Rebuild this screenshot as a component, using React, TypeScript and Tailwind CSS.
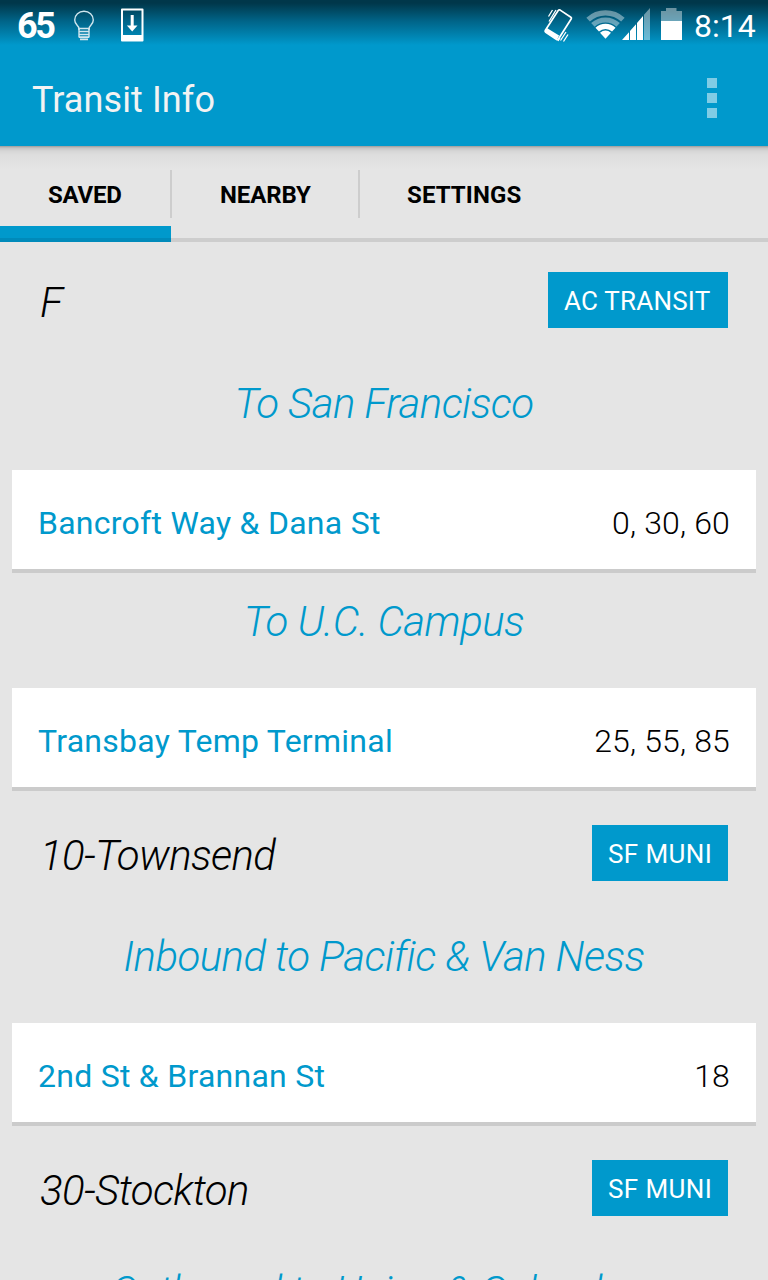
import React from "react";

function StatusBar() {
  return (
    <div className="flex h-[50px] items-start bg-gradient-to-b from-[#00374a] from-6% via-[#006488] via-42% to-[#0099cc] to-90%">
      <span className="ml-[17px] mt-[5px] w-[39px] text-[36px] font-bold leading-[42px] tracking-[-2.5px] text-white">65</span>
      <svg className="ml-[16px] mt-[10px]" width="24" height="32" viewBox="0 0 24 32" fill="none" stroke="#d0e6ee" strokeWidth="1.4">
        <path d="M7 20v-1.500C7 15.800 2.700 14.800 2.700 10A9.300 8.800 0 0 1 21.300 10C21.300 14.800 17 15.800 17 18.500V20" />
        <path d="M6.300 18.500h11.400M7 21.500h10M7 24.500h10M7 27.200h10M8 29.300h8" strokeWidth="1.700" />
        <path d="M7 18v9.500M17 18v9.500" />
      </svg>
      <svg className="ml-[24px] mt-[8px]" width="24" height="34" viewBox="0 0 24 34" fill="#fff">
        <path fillRule="evenodd" d="M2 .5h20.500q1 0 1 1v31q0 1-1 1H2q-1 0-1-1v-31q0-1 1-1zM3 2.500V27h18.500V2.500z" />
        <path d="M10.700 7h3v10.500h3.800l-5.300 6-5.300-6h3.800z" />
      </svg>
      <svg className="ml-auto mt-[7px]" width="30" height="36" viewBox="0 0 30 36" fill="none" stroke="#fff" strokeWidth="1.700">
        <path d="M16.200 3.100l10.700 7.200q.9.600.4 1.500L14.600 31.800q-.8 1.400-2 .7L1.800 25.300q-1.200-.8-.4-2L14.200 3.500q.8-1.100 2-.4z" />
        <path fill="#fff" stroke="none" d="M2.500 20.800l12.600 7.700-2 4.200L1 25z" />
        <path strokeWidth="1.300" d="M4.500 9.500l4-6.500M5 14.500l7-11.500M16.500 33.500l5.500-8.500M19.500 34.500l4.500-7M14 34l2-3" />
      </svg>
      <svg className="ml-[12px] mt-[8px]" width="96" height="34" viewBox="0 0 96 34">
        <g fill="none" strokeWidth="5.200">
          <path stroke="#fff" strokeOpacity=".4" d="M2.100 11.700A25.800 25.800 0 0 1 36.900 11.700" />
          <path stroke="#fff" strokeOpacity=".4" d="M6.900 16.900A18.700 18.700 0 0 1 32.100 16.900" />
          <path stroke="#fff" d="M11.200 21.600A12.300 12.300 0 0 1 27.800 21.600" />
        </g>
        <path fill="#fff" d="M19.500 30.700L14 24.700Q19.500 20.500 25 24.700z" />
        <path fill="#fff" d="M36 32l7-7.800V32zM44 22.900l6-6.700V32h-6zM51 14.900l6-6.900V32h-6z" />
        <path fill="#fff" fillOpacity=".42" d="M58 6.800L64 0v32h-6zM75 3h5V0h10.500v3H96v10H75z" />
        <path fill="#fff" d="M75 13h21v19H75z" />
      </svg>
      <span className="mt-[5px] w-[86px] pl-3 text-[32px] leading-[42px] text-white">8:14</span>
    </div>
  );
}

function Tabs() {
  return (
    <nav className="flex h-24 bg-[linear-gradient(to_bottom,#9c9c9c_0px,#c4c4c4_2px,#d6d6d6_5px,#dedede_9px,#e1e1e1_15px,#e5e5e5_24px)] text-[24px] font-bold leading-[50px] text-black">
      <div className="flex w-[171px] flex-col pt-6">
        <span className="h-14 pl-12 tracking-[-0.2px]">SAVED</span>
        <span className="h-4 border-b-4 border-[#008aba] bg-[#0099cc]" />
      </div>
      <div className="flex flex-1 border-b-4 border-[#cdcdcd] pt-6">
        <div className="relative -ml-px h-12 w-[190px] border-x-2 border-[#cdcdcd] pl-12 tracking-[-0.1px]">NEARBY</div>
        <div className="h-12 pl-[47px] tracking-[0.1px]">SETTINGS</div>
      </div>
    </nav>
  );
}

const lines = [
  { kind: "route", name: "F", agency: "AC TRANSIT" },
  { kind: "dir", name: "To San Francisco" },
  { kind: "stop", name: "Bancroft Way & Dana St", times: "0, 30, 60" },
  { kind: "dir", name: "To U.C. Campus" },
  { kind: "stop", name: "Transbay Temp Terminal", times: "25, 55, 85" },
  { kind: "route", name: "10-Townsend", agency: "SF MUNI" },
  { kind: "dir", name: "Inbound to Pacific & Van Ness" },
  { kind: "stop", name: "2nd St & Brannan St", times: "18" },
  { kind: "route", name: "30-Stockton", agency: "SF MUNI" },
  { kind: "dir", name: "Outbound to Union & Columbus" },
];

function Line({ line }: { line: (typeof lines)[number] }) {
  if (line.kind === "route") {
    return (
      <div className="flex h-[117px] items-start justify-between px-10 pt-[34px] first:h-[113px] first:pt-[30px]">
        <span className="text-[42px] font-light italic leading-[62px] tracking-[-0.6px] text-black">{line.name}</span>
        {line.agency === "AC TRANSIT" ? (
          <span className="flex h-14 w-[180px] items-center bg-[#0099cc] pl-4 pt-[2px] text-[26px] tracking-[0.2px] text-white">{line.agency}</span>
        ) : (
          <span className="flex h-14 w-[136px] items-center bg-[#0099cc] pl-4 pt-[2px] text-[26px] tracking-[0.4px] text-white">{line.agency}</span>
        )}
      </div>
    );
  }
  if (line.kind === "dir") {
    return <div className="h-[115px] whitespace-nowrap pt-6 text-center text-[42px] font-light italic leading-[50px] tracking-[-0.560px] text-[#0099cc]">{line.name}</div>;
  }
  return (
    <div className="mx-3 flex h-[103px] items-center justify-between border-b-4 border-[#cbcbcb] bg-white px-[26px] pt-[6px] text-[32px]">
      <span className="tracking-[0.260px] text-[#0099cc]">{line.name}</span>
      <span className="font-light tracking-[0.150px] text-black">{line.times}</span>
    </div>
  );
}

export default function App() {
  return (
    <div className="h-[1280px] w-[768px] overflow-hidden bg-[#e5e5e5] font-['Roboto',sans-serif]">
      <header className="h-[146px] bg-[#0099cc]">
        <StatusBar />
        <div className="flex h-24 items-center justify-between pl-8 pr-[51px]">
          <h1 className="pt-[3px] text-[36px] tracking-[0.1px] text-[#f3f3f3]">Transit Info</h1>
          <div className="flex flex-col gap-[5px]">
            <i className="size-[10px] bg-[#80cce5]" />
            <i className="size-[10px] bg-[#80cce5]" />
            <i className="size-[10px] bg-[#80cce5]" />
          </div>
        </div>
      </header>
      <Tabs />
      <main>{lines.map((line, i) => <Line key={i} line={line} />)}</main>
    </div>
  );
}
